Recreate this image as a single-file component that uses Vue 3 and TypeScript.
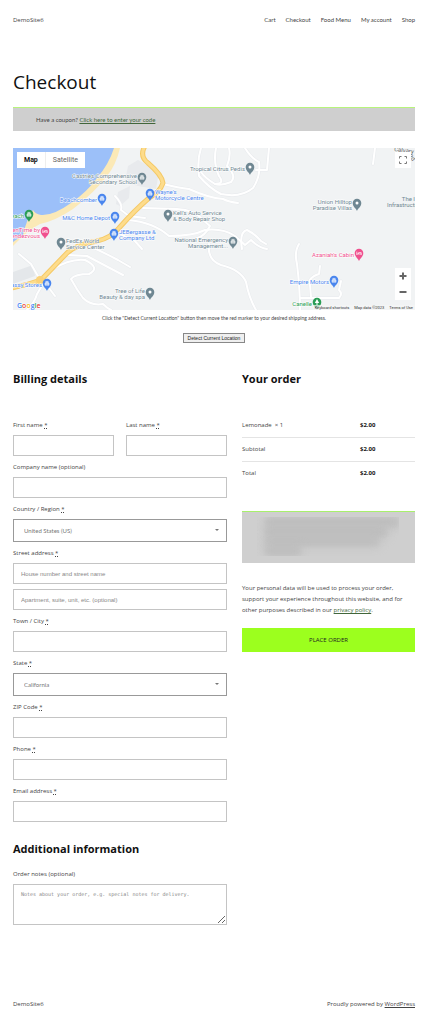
<script setup lang="ts">
import { ref } from 'vue'

interface Pin {
  x: number
  y: number
  kind: 'place' | 'shop' | 'hotel' | 'park'
  lines: string[]
  side: 'start' | 'end'
  glyph: 'dot' | 'bag' | 'bed' | 'tree'
}

interface Field {
  id: string
  label: string
  required: boolean
  options?: string[]
  placeholders: string[]
}

const navItems = ['Cart', 'Checkout', 'Food Menu', 'My account', 'Shop']

const pins: Pin[] = [
  { x: 129, y: 30, kind: 'place', lines: ['Castries Comprehensive', 'Secondary School'], side: 'end', glyph: 'bag' },
  { x: 89, y: 51, kind: 'shop', lines: ['Beachcomber'], side: 'end', glyph: 'bag' },
  { x: 102, y: 69, kind: 'shop', lines: ['M&C Home Depot'], side: 'end', glyph: 'bag' },
  { x: 137, y: 46, kind: 'shop', lines: ["Wayne's", 'Motorcycle Centre'], side: 'start', glyph: 'bag' },
  { x: 101, y: 86, kind: 'shop', lines: ['JEBergasse &', 'Company Ltd'], side: 'start', glyph: 'bag' },
  { x: 155, y: 67, kind: 'place', lines: ["Kell's Auto Service", '& Body Repair Shop'], side: 'start', glyph: 'dot' },
  { x: 16, y: 67, kind: 'park', lines: ['Beach'], side: 'end', glyph: 'bag' },
  { x: 32, y: 84, kind: 'hotel', lines: ['GoldenTime by', 'Rendezvous'], side: 'end', glyph: 'bed' },
  { x: 48, y: 95, kind: 'place', lines: ['FedEx World', 'Service Center'], side: 'start', glyph: 'dot' },
  { x: 34, y: 136, kind: 'shop', lines: ['Massy Stores'], side: 'end', glyph: 'bag' },
  { x: 137, y: 145, kind: 'place', lines: ['Tree of Life', 'Beauty & day spa'], side: 'end', glyph: 'dot' },
  { x: 237, y: 20, kind: 'place', lines: ['Tropical Citrus Pedis'], side: 'end', glyph: 'dot' },
  { x: 344, y: 56, kind: 'place', lines: ['Union Hilltop', 'Paradise Villas'], side: 'end', glyph: 'dot' },
  { x: 220, y: 94, kind: 'place', lines: ['National Emergency', 'Management...'], side: 'end', glyph: 'bag' },
  { x: 346, y: 106, kind: 'hotel', lines: ["Azaniah's Cabin"], side: 'end', glyph: 'bed' },
  { x: 321, y: 133, kind: 'shop', lines: ['Empire Motors'], side: 'end', glyph: 'bag' },
  { x: 304, y: 155, kind: 'park', lines: ['Canelle'], side: 'end', glyph: 'tree' },
]

const streets = [
  'M203 0 Q200 15 206 28 Q212 36 202 36 Q192 30 188 24',
  'M216 0 Q218 8 214 18 Q224 28 218 34 Q208 38 202 36',
  'M232 0 Q238 10 246 14 Q248 28 240 40 Q228 50 208 46 Q196 40 186 28 Q184 12 188 0',
  'M256 0 L254 22 L243 22',
  'M150 36 Q166 40 176 41 Q196 50 210 51 Q216 54 225 55',
  'M130 60 L164 61 Q182 62 190 72 L197 78 Q192 88 184 90',
  'M115 72 Q140 74 156 88 Q180 88 192 82 Q210 80 222 88 L232 97 L238 92 Q246 100 254 101',
  'M196 96 Q194 112 208 117 Q228 122 233 134 Q236 150 243 162',
  'M102 48 Q110 56 108 62 L116 68 L132 70',
  'M104 84 Q114 90 121 92 L129 101',
  'M72 96 Q90 104 105 112 L117 119',
  'M55 107 L74 108 L110 127',
  'M38 122 Q58 110 72 112 Q88 120 76 126 Q62 126 58 131 Q64 142 70 150 Q78 158 90 156 Q94 160 98 162',
  'M6 106 L18 116 L26 130',
  'M29 132 L36 140 L42 148',
  'M14 162 Q22 154 24 146 L30 136',
  'M229 101 Q226 84 234 82 Q242 86 248 93 L253 96',
  'M286 96 Q281 104 284 116 Q287 140 287 162',
  'M307 118 L306 126 Q294 130 297 137 L298 149',
  'M287 150 L326 150 Q330 146 326 142 L328 133',
  'M362 0 L360 16',
]

const highway =
  'M132 -2 Q126 8 135 15 Q149 27 150 35 Q147 44 136 50 Q122 62 106 80 Q98 90 84 93 Q62 97 54 105 L28 132 Q14 137 -2 140'

const fields: Field[] = [
  { id: 'company', label: 'Company name (optional)', required: false, placeholders: [''] },
  { id: 'country', label: 'Country / Region', required: true, options: ['United States (US)'], placeholders: [] },
  {
    id: 'street',
    label: 'Street address',
    required: true,
    placeholders: ['House number and street name', 'Apartment, suite, unit, etc. (optional)'],
  },
  { id: 'city', label: 'Town / City', required: true, placeholders: [''] },
  { id: 'state', label: 'State', required: true, options: ['California'], placeholders: [] },
  { id: 'zip', label: 'ZIP Code', required: true, placeholders: [''] },
  { id: 'phone', label: 'Phone', required: true, placeholders: [''] },
  { id: 'email', label: 'Email address', required: true, placeholders: [''] },
]

const mapType = ref<'Map' | 'Satellite'>('Map')

function labelY(pin: Pin, index: number): number {
  return pin.lines.length === 1 ? pin.y + 3 : pin.y + index * 6
}
</script>

<template>
  <div class="page">
    <header class="bar">
      <a class="brand" href="#">DemoSite6</a>
      <nav class="nav">
        <a v-for="item in navItems" :key="item" href="#">{{ item }}</a>
      </nav>
    </header>

    <main>
      <h1>Checkout</h1>
      <p class="coupon">Have a coupon? <a href="#">Click here to enter your code</a></p>

      <section class="map" aria-label="Delivery map">
        <svg class="map-art" viewBox="0 0 402 162" preserveAspectRatio="xMidYMid slice">
          <rect width="402" height="162" fill="#f1f3f4" />
          <path d="M115 18 L125 12 L146 24 L143 41 L125 38 L112 34 Z M105 44 L117 38 L116 50 L107 58 L103 56 Z" fill="#e8eaed" />
          <path d="M0 124 L20 117 L22 128 L0 136 Z" fill="#e4e7ea" />
          <path d="M0 0 H107 Q103 17 94 28 Q82 44 60 61 Q42 73 27 76 Q15 82 0 98 Z" fill="#fbe9b7" />
          <path d="M0 0 H101 Q96 16 84 30 Q74 44 58 55 Q40 68 28 67 Q22 66 20 62 Q13 73 10 87 L0 94 Z" fill="#9cc0f9" />
          <g fill="none" stroke-linecap="round" stroke-linejoin="round">
            <path v-for="d in streets" :key="d" :d="d" stroke="#e8eaed" stroke-width="3" />
            <path v-for="d in streets" :key="'w' + d" :d="d" stroke="#fff" stroke-width="2" />
            <path :d="highway" stroke="#f5c966" stroke-width="5" />
            <path :d="highway" stroke="#fddc8c" stroke-width="3" />
          </g>
          <circle cx="27" cy="132" r="4" fill="#fad27a" />
          <g class="road-name">
            <text transform="translate(381 3) rotate(8)">Calvary</text>
            <text transform="translate(395 8) rotate(50)">Rd</text>
          </g>
          <text class="poi spot" x="402" y="53" text-anchor="end">The I</text>
          <text class="poi spot" x="374" y="59">Infrastructure</text>
          <g v-for="pin in pins" :key="pin.lines[0]" :class="['poi', pin.kind === 'place' ? 'spot' : pin.kind]">
            <text
              v-for="(line, i) in pin.lines"
              :key="line"
              :x="pin.side === 'end' ? pin.x - 5 : pin.x + 5"
              :y="labelY(pin, i)"
              :text-anchor="pin.side"
            >{{ line }}</text>
            <g :transform="`translate(${pin.x} ${pin.y})`">
              <path d="M0 7 C-1 4 -4.3 3 -4.3 -1 A4.3 4.3 0 1 1 4.3 -1 C4.3 3 1 4 0 7 Z" />
              <circle v-if="pin.glyph === 'dot'" cy="-1" r="1.5" fill="#fff" />
              <path v-else-if="pin.glyph === 'bag'" d="M-2 -1 H2 V1.2 H-2 Z M-1.2 -1 V-2.6 H1.2 V-1" fill="#fff" fill-opacity="0.6" stroke="#fff" stroke-width="0.5" />
              <path v-else-if="pin.glyph === 'bed'" d="M-2.2 -2.4 V1 M-2.2 0 H2.2 M2.2 1 V-1.4 H-0.4 V0" fill="none" stroke="#fff" stroke-width="0.7" />
              <path v-else d="M0 -4 L2.2 0 H0.5 V2 H-0.5 V0 H-2.2 Z" fill="#fff" />
            </g>
          </g>
          <text class="logo" x="4" y="160"><tspan fill="#4285f4">G</tspan><tspan fill="#ea4335">o</tspan><tspan fill="#fbbc04">o</tspan><tspan fill="#4285f4">g</tspan><tspan fill="#34a853">l</tspan><tspan fill="#ea4335">e</tspan></text>
        </svg>
        <div class="map-types">
          <button type="button" :class="{ active: mapType === 'Map' }" @click="mapType = 'Map'">Map</button>
          <button type="button" :class="{ active: mapType === 'Satellite' }" @click="mapType = 'Satellite'">Satellite</button>
        </div>
        <button class="fullscreen" type="button" aria-label="Toggle fullscreen view">
          <svg viewBox="0 0 8 8"><path d="M0.5 2.5 V0.5 H2.5 M5.5 0.5 H7.5 V2.5 M7.5 5.5 V7.5 H5.5 M2.5 7.5 H0.5 V5.5" /></svg>
        </button>
        <div class="zoom">
          <button type="button" aria-label="Zoom in"><svg viewBox="0 0 8 8"><path d="M4 0.5 V7.5 M0.5 4 H7.5" /></svg></button>
          <button type="button" aria-label="Zoom out"><svg viewBox="0 0 8 8"><path d="M0.5 4 H7.5" /></svg></button>
        </div>
        <div class="map-legal">
          <button type="button">Keyboard shortcuts</button>
          <span>Map data ©2023</span>
          <a href="#">Terms of Use</a>
        </div>
      </section>
      <p class="hint">Click the "Detect Current Location" button then move the red marker to your desired shipping address.</p>
      <button class="detect" type="button">Detect Current Location</button>

      <form class="columns" @submit.prevent>
        <div class="billing">
          <h2>Billing details</h2>
          <div class="fields">
            <div class="names">
              <div class="field">
                <label for="first">First name <abbr title="required">*</abbr></label>
                <input id="first" type="text" />
              </div>
              <div class="field">
                <label for="last">Last name <abbr title="required">*</abbr></label>
                <input id="last" type="text" />
              </div>
            </div>
            <div v-for="field in fields" :key="field.id" class="field">
              <label :for="field.id">{{ field.label }} <abbr v-if="field.required" title="required">*</abbr></label>
              <div v-if="field.options" class="select">
                <select :id="field.id">
                  <option v-for="option in field.options" :key="option">{{ option }}</option>
                </select>
              </div>
              <template v-else>
                <input
                  v-for="(hint, i) in field.placeholders"
                  :id="i === 0 ? field.id : field.id + '-2'"
                  :key="i"
                  type="text"
                  :placeholder="hint"
                  :aria-label="i === 0 ? undefined : hint"
                />
              </template>
            </div>
          </div>
          <h2 class="extra">Additional information</h2>
          <div class="field">
            <label for="notes">Order notes (optional)</label>
            <textarea id="notes" placeholder="Notes about your order, e.g. special notes for delivery."></textarea>
          </div>
        </div>

        <div class="order">
          <h2>Your order</h2>
          <table>
            <tbody>
              <tr><td>Lemonade &nbsp;× 1</td><td class="price">$2.00</td></tr>
              <tr><td>Subtotal</td><td class="price">$2.00</td></tr>
              <tr><td>Total</td><td class="price">$2.00</td></tr>
            </tbody>
          </table>
          <div class="payment">
            <div class="smudge"><i></i><i></i><i></i><i></i></div>
          </div>
          <p class="privacy">
            Your personal data will be used to process your order, support your experience throughout this website, and for
            other purposes described in our <a href="#">privacy policy</a>.
          </p>
          <button class="submit" type="submit">PLACE ORDER</button>
        </div>
      </form>
    </main>

    <footer class="bar foot">
      <a class="brand" href="#">DemoSite6</a>
      <span>Proudly powered by <a href="#">WordPress</a></span>
    </footer>
  </div>
</template>

<style>
body {
  background: #fff;
}
</style>

<style scoped>
.page {
  box-sizing: border-box;
  padding: 14px 13px;
  font-family: "Open Sans", "Noto Sans", sans-serif;
  font-size: 6px;
  line-height: 12px;
  color: #444;
}
.page * {
  box-sizing: border-box;
}
h1,
h2,
p {
  margin: 0;
}
a {
  color: inherit;
}
button,
input,
select,
textarea {
  font-family: inherit;
  font-size: 6px;
  color: inherit;
  margin: 0;
}
.bar {
  display: flex;
  justify-content: space-between;
}
.brand,
.nav a {
  text-decoration: none;
}
.nav {
  display: flex;
  gap: 10px;
  font-family: Lato, sans-serif;
}
h1 {
  margin-top: 41px;
  font-size: 19px;
  line-height: 30px;
  font-weight: 400;
  color: #111;
}
.coupon {
  margin-top: 10px;
  padding: 6px 23px 5px;
  background: #cfcfcf;
  border-top: 1px solid #b8f47c;
  font-family: Lato, sans-serif;
}
.coupon a {
  color: #41663a;
}
.map {
  position: relative;
  height: 162px;
  margin-top: 17px;
  overflow: hidden;
  font-family: Roboto, sans-serif;
}
.map-art {
  display: block;
  width: 100%;
  height: 100%;
}
.poi text {
  stroke: #fff;
  stroke-width: 1px;
  paint-order: stroke;
}
.poi,
.road-name {
  font-size: 6px;
}
.spot {
  fill: #6f8792;
}
.shop {
  fill: #4a86ee;
}
.hotel {
  fill: #f0508e;
}
.park {
  fill: #2a9d55;
}
.road-name {
  fill: #666;
}
.logo {
  font-family: "Open Sans", sans-serif;
  font-size: 7px;
  font-weight: 600;
  stroke: #fff;
  stroke-width: 1px;
  paint-order: stroke;
}
.map-types {
  position: absolute;
  top: 4px;
  left: 4px;
  display: flex;
  background: #fff;
}
.map-types button {
  height: 16px;
  padding: 0 7px;
  border: 0;
  background: none;
  font-size: 7px;
  color: #666;
}
.map-types button + button {
  border-left: 1px solid #eee;
}
.map-types .active {
  font-weight: 700;
  color: #111;
}
.fullscreen,
.zoom button {
  display: grid;
  place-items: center;
  width: 16px;
  height: 16px;
  padding: 0;
  border: 0;
  background: #fff;
}
.fullscreen {
  position: absolute;
  top: 4px;
  right: 4px;
}
.map button svg {
  width: 8px;
  height: 8px;
  fill: none;
  stroke: #777;
  stroke-width: 1px;
}
.map .zoom svg {
  stroke: #666;
  stroke-width: 2px;
}
.zoom {
  position: absolute;
  right: 4px;
  bottom: 10px;
  background: #fff;
}
.map-legal {
  position: absolute;
  right: 0;
  bottom: 0;
  display: flex;
  gap: 5px;
  padding: 0 2px;
  background: rgba(245, 245, 245, 0.7);
  font-size: 4px;
  line-height: 5px;
  color: #333;
}
.map-legal button {
  padding: 0;
  border: 0;
  background: none;
  font-size: 4px;
  line-height: 5px;
}
.map-legal a {
  text-decoration: none;
}
.hint {
  margin-top: 2px;
  font-family: Lato, sans-serif;
  font-size: 5px;
  text-align: center;
}
.detect {
  display: block;
  margin: 9px auto 0;
  padding: 0 4px;
  height: 10px;
  line-height: 8px;
  border: 1px solid #888;
  background: #efefef;
  font-family: "Liberation Sans", sans-serif;
  font-size: 5px;
  color: #222;
}
.columns {
  display: grid;
  grid-template-columns: 214fr 173fr;
  gap: 15px;
  margin-top: 28px;
}
h2 {
  font-size: 11px;
  line-height: 16px;
  font-weight: 700;
  color: #111;
}
.fields {
  display: grid;
  gap: 5px;
  margin-top: 32px;
}
.names {
  display: grid;
  grid-template-columns: 1fr 1fr;
  gap: 12px;
}
.field label {
  display: block;
  margin-bottom: 4px;
}
abbr {
  text-decoration: underline dotted;
}
input,
select,
textarea {
  display: block;
  width: 100%;
  border: 1px solid #c4c4c4;
  border-radius: 0;
  background: #fff;
  font-family: "Liberation Sans", sans-serif;
  color: #777;
}
input {
  height: 21px;
  padding: 0 7px;
}
input + input {
  margin-top: 5px;
}
::placeholder {
  color: #888;
  opacity: 1;
}
.select {
  position: relative;
}
.select::after {
  content: "";
  position: absolute;
  top: 10px;
  right: 8px;
  border: 2px solid transparent;
  border-top-color: #777;
  border-bottom: 0;
}
select {
  appearance: none;
  height: 23px;
  padding: 0 10px;
  border-color: #999;
  font-family: Lato, sans-serif;
}
.extra {
  margin-top: 19px;
  margin-bottom: 11px;
}
textarea {
  height: 41px;
  padding: 5px 7px;
  font-family: "DejaVu Sans Mono", monospace;
  font-size: 5px;
  line-height: 8px;
  resize: vertical;
}
table {
  width: 100%;
  margin-top: 26px;
  border-collapse: collapse;
}
td {
  height: 24px;
  padding: 0;
}
tr + tr td {
  border-top: 1px solid #e4e4e4;
}
.price {
  width: 55px;
  font-weight: 700;
  color: #111;
}
.payment {
  height: 52px;
  margin-top: 26px;
  padding: 5px 16px 7px 15px;
  border-top: 1px solid #a8f06c;
  background: #cfcfcf;
}
.smudge {
  display: grid;
  height: 39px;
  padding-left: 8px;
  overflow: hidden;
}
.smudge i {
  background: #bababa;
  filter: blur(4px);
}
.smudge i:nth-child(2) {
  margin-right: 12px;
}
.smudge i:nth-child(3) {
  margin-right: 20px;
}
.smudge i:nth-child(4) {
  margin-right: 98px;
}
.privacy {
  margin-top: 20px;
  line-height: 11px;
}
.privacy a {
  color: #41663a;
}
.submit {
  display: block;
  width: 100%;
  height: 24px;
  margin-top: 12px;
  border: 0;
  background: #9cff1e;
  color: #222;
}
.foot {
  margin-top: 73px;
}
</style>
